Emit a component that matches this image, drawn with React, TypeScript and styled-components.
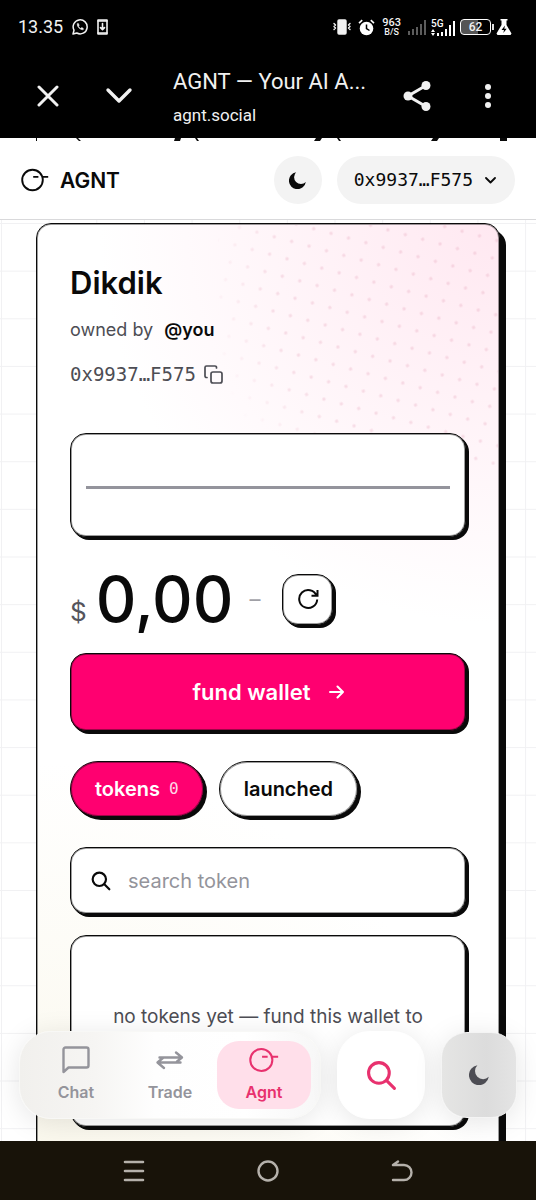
import React from "react";
import styled, { createGlobalStyle } from "styled-components";

const ink = "#0a0a0a";
const pink = "#ff0070";
const rose = "#e8316e";
const grey = "#94949b";
const body = "#4d4d54";
const sans = `Inter, "Liberation Sans", sans-serif`;
const mono = `"DejaVu Sans Mono", "Liberation Mono", monospace`;
const system = `Roboto, "Liberation Sans", sans-serif`;

const GlobalStyle = createGlobalStyle`
  *, *::before, *::after { box-sizing: border-box; }
  body { margin: 0; background: #fff; color: ${ink}; font-family: ${sans}; }
  button, input { font: inherit; color: inherit; margin: 0; }
  button { border: 0; padding: 0; background: none; cursor: pointer; }
  a { color: inherit; text-decoration: none; }
  svg { display: block; flex: none; }
  h1, p { margin: 0; }
`;

const Phone = styled.div`
  display: flex;
  flex-direction: column;
  height: 100vh;
  overflow: hidden;
`;

const StatusBar = styled.div`
  display: flex;
  align-items: center;
  justify-content: space-between;
  height: 54px;
  padding: 0 24px 0 18px;
  background: #000;
  color: #f2f2f2;
  font: 400 18px/22px ${system};
`;

const StatusGroup = styled.div<{ $gap: number }>`
  display: flex;
  align-items: center;
  gap: ${(p) => p.$gap}px;
`;

const Rate = styled.div`
  display: flex;
  flex-direction: column;
  align-items: center;
  font: 500 11px/10px ${system};
  small { font-size: 9px; line-height: 9px; }
`;

const Battery = styled.div`
  position: relative;
  width: 31px;
  height: 16px;
  border: 1px solid #fff;
  border-radius: 4px;
  background: linear-gradient(90deg, #555 60%, #000 60%);
  text-align: center;
  font: 500 12px/14px ${system};
  &::after {
    content: "";
    position: absolute;
    right: -4px;
    top: 4px;
    width: 2px;
    height: 6px;
    background: #ddd;
  }
`;

const BrowserBar = styled.div`
  display: flex;
  align-items: center;
  height: 84px;
  padding: 0 32px;
  background: #000;
  color: #f1f1f1;
`;

const BarButton = styled.button`
  display: grid;
  place-items: center;
  width: 32px;
  height: 40px;
`;

const BarSpacer = styled.span<{ $width: number }>`
  width: ${(p) => p.$width}px;
`;

const PageTitle = styled.div`
  flex: 1;
  min-width: 0;
  padding-top: 4px;
  font-family: ${system};
  div { font-size: 22px; line-height: 34px; overflow: hidden; white-space: nowrap; text-overflow: ellipsis; }
  span { display: block; font-size: 17px; line-height: 32px; }
`;

const Viewport = styled.div`
  position: relative;
  flex: 1;
  min-height: 0;
  overflow: hidden;
`;

const TickerEdge = styled.div`
  height: 3px;
  overflow: hidden;
`;

const SiteHeader = styled.header`
  display: flex;
  align-items: center;
  gap: 15px;
  height: 79px;
  padding: 0 21px;
  border-bottom: 1px solid #d9d9db;
  background: #fff;
`;

const Brand = styled.a`
  display: flex;
  align-items: center;
  gap: 11px;
  margin-right: auto;
  font-size: 21px;
  font-weight: 600;
`;

const RoundButton = styled.button`
  display: grid;
  place-items: center;
  width: 48px;
  height: 48px;
  border-radius: 24px;
  background: #f3f3f3;
`;

const WalletButton = styled.button`
  display: flex;
  align-items: center;
  gap: 12px;
  height: 48px;
  padding: 0 19px 0 17px;
  border-radius: 24px;
  background: #f3f3f3;
  font: 400 18px/24px ${mono};
`;

const GridPaper = styled.main`
  min-height: 100%;
  padding: 3px 36px 0;
  background-image: linear-gradient(#f1f1f3 1px, transparent 1px),
    linear-gradient(90deg, #f1f1f3 1px, transparent 1px);
  background-size: calc(100vw / 11.25) calc(100vw / 11.25);
  background-position: 1px 3px;
`;

const Card = styled.section`
  position: relative;
  min-height: 1000px;
  padding: 40px 33px;
  border: 1px solid ${ink};
  border-radius: 15px;
  background: radial-gradient(circle at 100% 0, #ffe8f1 0, rgba(255, 232, 241, 0) 400px),
    radial-gradient(circle at 0 100%, #faf7ea 0, rgba(250, 247, 234, 0) 460px), #fff;
  box-shadow: inset 0 0 0 1px rgba(10, 10, 10, 0.4), 6px 7px 0 ${ink};
`;

const Dots = styled.svg`
  position: absolute;
  top: 1px;
  right: 1px;
  border-top-right-radius: 13px;
`;

const Content = styled.div`
  position: relative;
  display: flex;
  flex-direction: column;
`;

const AgentName = styled.h1`
  font-size: 31px;
  font-weight: 600;
  line-height: 38px;
`;

const Owner = styled.p`
  display: flex;
  gap: 11px;
  margin-top: 16px;
  color: ${body};
  font-size: 18px;
  line-height: 24px;
  strong { color: ${ink}; font-weight: 600; }
`;

const Address = styled.button`
  display: flex;
  align-items: center;
  gap: 8px;
  margin-top: 20px;
  color: ${body};
  font: 400 19px/24px ${mono};
`;

const Raised = styled.div`
  border: 1px solid ${ink};
  border-radius: 16px;
  background: #fff;
  box-shadow: inset 0 0 0 1px rgba(10, 10, 10, 0.4), 1px 1px 0 ${ink}, 2px 2px 0 ${ink}, 3px 3px 0 ${ink};
`;

const ChartBox = styled(Raised)`
  display: flex;
  align-items: center;
  height: 104px;
  margin-top: 47px;
  padding: 4px 15px 0;
  hr { width: 100%; height: 3px; margin: 0; border: 0; background: #94949c; }
`;

const Balance = styled.div`
  display: flex;
  align-items: center;
  height: 76px;
  margin-top: 24px;
`;

const Currency = styled.span`
  align-self: flex-end;
  margin-right: 9px;
  color: #55555c;
  font-size: 26px;
  line-height: 50px;
`;

const Amount = styled.span`
  font-size: 63px;
  font-weight: 500;
  line-height: 76px;
`;

const Change = styled.span`
  margin: 0 22px 0 16px;
  color: #a0a0a6;
  font-size: 22px;
`;

const RefreshButton = styled(Raised).attrs({ as: "button" })`
  display: grid;
  place-items: center;
  width: 51px;
  height: 51px;
`;

const FundButton = styled(Raised).attrs({ as: "button" })`
  display: flex;
  align-items: center;
  justify-content: center;
  gap: 18px;
  height: 78px;
  margin-top: 16px;
  background: ${pink};
  color: #fff;
  font-size: 22px;
  font-weight: 600;
`;

const Tabs = styled.div`
  display: flex;
  gap: 15px;
  margin-top: 30px;
`;

const Tab = styled(Raised).attrs({ as: "button" })<{ $active?: boolean }>`
  display: flex;
  align-items: center;
  gap: 9px;
  height: 56px;
  padding: 0 24px;
  border-radius: 28px;
  background: ${(p) => (p.$active ? pink : "#fff")};
  color: ${(p) => (p.$active ? "#fff" : ink)};
  font-size: 20px;
  font-weight: 600;
  small { font: 400 16px/20px ${mono}; color: #ffd5e6; }
`;

const SearchField = styled(Raised).attrs({ as: "label" })`
  display: flex;
  align-items: center;
  gap: 17px;
  height: 67px;
  margin-top: 30px;
  padding: 0 20px;
  input {
    flex: 1;
    min-width: 0;
    border: 0;
    padding: 0;
    outline: 0;
    background: none;
    font-size: 20px;
    line-height: 26px;
  }
  input::placeholder { color: ${grey}; opacity: 1; }
`;

const EmptyState = styled(Raised)`
  height: 192px;
  margin-top: 21px;
  padding: 69px 20px 0;
  color: ${body};
  text-align: center;
  font-size: 19px;
  line-height: 24px;
`;

const Dock = styled.div`
  position: absolute;
  left: 19px;
  right: 19px;
  bottom: 22px;
  display: flex;
  align-items: center;
  gap: 16px;
`;

const DockGroup = styled.nav`
  display: flex;
  flex: 1;
  align-items: center;
  height: 88px;
  padding: 0 9px;
  border: 1px solid #f8f8f6;
  border-radius: 32px;
  background: linear-gradient(90deg, #f1f0ed 0, #f6f5f3 25%, #fefefe 45%, #fff 75%, #f7f7f7 100%);
  box-shadow: 0 4px 28px rgba(0, 0, 0, 0.1);
`;

const DockLink = styled.a<{ $active?: boolean }>`
  display: flex;
  flex: 1;
  flex-direction: column;
  align-items: center;
  gap: 4px;
  height: 68px;
  padding-top: 4px;
  border-radius: 22px;
  background: ${(p) => (p.$active ? "#ffdfea" : "transparent")};
  color: ${(p) => (p.$active ? rose : grey)};
  font-size: 16px;
  font-weight: 600;
  line-height: 26px;
`;

const DockButton = styled.button<{ $muted?: boolean }>`
  display: grid;
  place-items: center;
  width: ${(p) => (p.$muted ? 76 : 88)}px;
  height: ${(p) => (p.$muted ? 86 : 88)}px;
  border: 1px solid ${(p) => (p.$muted ? "#f4f4f4" : "#fff")};
  border-radius: ${(p) => (p.$muted ? 26 : 32)}px;
  background: ${(p) => (p.$muted ? "linear-gradient(90deg, #e5e5e4, #dcdcdc 60%, #e4e4e4)" : "#fff")};
  box-shadow: 0 4px 28px rgba(0, 0, 0, 0.1);
  color: ${(p) => (p.$muted ? body : rose)};
`;

const SystemNav = styled.div`
  display: flex;
  height: 59px;
  padding: 0 12.5%;
  background: #181309;
  color: #b5b1ab;
  button { flex: 1; display: grid; place-items: center; }
`;

const stroke = {
  fill: "none",
  stroke: "currentColor",
  strokeLinecap: "round" as const,
  strokeLinejoin: "round" as const,
};

const Moon = ({ size }: { size: number }) => (
  <svg width={size} height={size} viewBox="0 0 20 20" fill="currentColor">
    <path d="M8.4.3a10 10 0 1 0 11.4 11.5A7.3 7.3 0 0 1 8.4.3Z" />
  </svg>
);

const AgentMark = ({ width }: { width: number }) => (
  <svg width={width} height={width} viewBox="0 0 28 28" {...stroke} strokeWidth="1.9" strokeLinecap="butt">
    <circle cx="11.5" cy="14" r="10.3" />
    <path d="M12.2 10.9h5.2M20.8 10.9h6.4" />
  </svg>
);

const Magnifier = ({ size, weight }: { size: number; weight: number }) => (
  <svg width={size} height={size} viewBox="0 0 24 24" {...stroke} strokeWidth={weight}>
    <circle cx="10" cy="10" r="8" />
    <path d="m16 16 6 6" />
  </svg>
);

const Signal = ({ color }: { color: string }) => (
  <svg width="18" height="15" fill={color}>
    <path d="M0 11h2v4H0zM4 9h2v6H4zM8 7h2v8H8zM12 4h2v11h-2zM16 0h2v15h-2z" />
  </svg>
);

export default function App() {
  return (
    <Phone>
      <GlobalStyle />
      <StatusBar>
        <StatusGroup $gap={9}>
          <span>13.35</span>
          <svg width="16" height="16" viewBox="0 0 16 16" {...stroke} strokeWidth="1.5">
            <path d="m1 15 1-3.8A7 7 0 1 1 4.8 14Z" />
            <path d="M5.3 4.8c-.7 2.6 3.4 6.7 6 5.8l-.1-1.3-1.6-.7-.9.9c-1-.4-1.9-1.4-2.3-2.3l.7-.9-.6-1.5Z" fill="currentColor" strokeWidth=".6" />
          </svg>
          <svg width="11" height="16" viewBox="0 0 11 16" {...stroke} strokeWidth="1.6">
            <path d="M1 1h9v14H1Z" />
            <path d="M1 2h9M1 14h9M5.5 4.5v6M3.5 8.6l2 2 2-2" />
          </svg>
        </StatusGroup>
        <StatusGroup $gap={7}>
          <svg width="18" height="16" viewBox="0 0 18 16" {...stroke} strokeWidth="1.4">
            <rect x="5" y="1" width="8" height="14" rx="1" fill="currentColor" />
            <path d="m1 4.5 1.5 1.5L1 7.5 2.5 9 1 10.5M17 4.5 15.5 6 17 7.5 15.5 9l1.5 1.5" />
          </svg>
          <svg width="17" height="17" viewBox="0 0 17 17">
            <circle cx="8.5" cy="9.5" r="6.8" fill="#fff" />
            <path d="M8.5 5.5v4l3 2" fill="none" stroke="#000" strokeWidth="1.5" />
            <path d="M1 4.2 4.2 1.2M16 4.2l-3.2-3" stroke="#fff" strokeWidth="1.6" />
          </svg>
          <Rate>
            963<small>B/S</small>
          </Rate>
          <StatusGroup $gap={5}>
            <Signal color="#5c5c5c" />
            <svg width="24" height="17" viewBox="0 0 24 17" fill="#fff">
              <text x="0" y="8" fontFamily="Roboto, sans-serif" fontSize="10" fontWeight="500">5G</text>
              <path d="M6 14h2v3H6zM10 13h2v4h-2zM14 10h2v7h-2zM18 6h2v11h-2zM22 2h2v15h-2zM0 13l2-3 2 3zM0 14h4l-2 3z" />
            </svg>
            <Battery>62</Battery>
            <svg width="16" height="16" viewBox="0 0 16 16">
              <path d="M4.5 0h7v1.5h-1V6l5 8.5-1 1.5h-13L.5 14.5 5.5 6V1.5h-1Z" fill="#fff" />
              <path d="M9 6.5 5.5 11H8l-.7 3 3.4-4.3H8.3Z" fill="#000" />
            </svg>
          </StatusGroup>
        </StatusGroup>
      </StatusBar>

      <BrowserBar>
        <BarButton aria-label="Close">
          <svg width="22" height="22" viewBox="0 0 22 22" {...stroke} strokeWidth="3"><path d="m2 2 18 18M20 2 2 20" /></svg>
        </BarButton>
        <BarSpacer $width={39} />
        <BarButton aria-label="Minimise">
          <svg width="28" height="18" viewBox="0 0 28 18" {...stroke} strokeWidth="3.4"><path d="m3 3 11 11L25 3" /></svg>
        </BarButton>
        <BarSpacer $width={38} />
        <PageTitle>
          <div>AGNT — Your AI A...</div>
          <span>agnt.social</span>
        </PageTitle>
        <BarButton aria-label="Share">
          <svg width="28" height="30" viewBox="0 0 28 30" fill="currentColor">
            <path d="M23 4.5 5 15l18 10.5" fill="none" stroke="currentColor" strokeWidth="3" />
            <circle cx="23" cy="4.5" r="4.5" /><circle cx="5" cy="15" r="4.5" /><circle cx="23" cy="25.5" r="4.5" />
          </svg>
        </BarButton>
        <BarSpacer $width={39} />
        <BarButton aria-label="More">
          <svg width="6" height="24" viewBox="0 0 6 24" fill="currentColor">
            <circle cx="3" cy="3" r="3" /><circle cx="3" cy="12" r="3" /><circle cx="3" cy="21" r="3" />
          </svg>
        </BarButton>
      </BrowserBar>

      <Viewport>
        <TickerEdge>
          <svg width="536" height="3" viewBox="0 0 536 3" fill={ink} aria-hidden="true">
            <path d="M36 0h1v3h-1zM76 0h2l3 3h-2zM175 0h6l-1 3h-6zM195 0h2l2 3h-2zM316 0h6l-2 3h-6zM337 0h2l2 3h-2zM433 0h6l-2 3h-6zM500 0h7v3h-7z" />
          </svg>
        </TickerEdge>
        <SiteHeader>
          <Brand href="#">
            <AgentMark width={28} />
            AGNT
          </Brand>
          <RoundButton aria-label="Dark mode"><Moon size={17} /></RoundButton>
          <WalletButton>
            0x9937…F575
            <svg width="11" height="7" viewBox="0 0 11 7" {...stroke} strokeWidth="1.8"><path d="m1 1 4.5 4.5L10 1" /></svg>
          </WalletButton>
        </SiteHeader>

        <GridPaper>
          <Card>
            <Dots width="280" height="240" viewBox="0 0 280 240" aria-hidden="true">
              <defs>
                <pattern id="dots" x="-9" y="-9" width="18" height="18" patternUnits="userSpaceOnUse" patternTransform="translate(95.7 3.7) rotate(15)">
                  <circle cx="9" cy="9" r="1.7" fill="#ecb8ca" />
                </pattern>
                <radialGradient id="fade" gradientUnits="userSpaceOnUse" cx="230" cy="60" r="290">
                  <stop offset="0" stopColor="#fff" stopOpacity=".45" />
                  <stop offset=".6" stopColor="#fff" stopOpacity=".4" />
                  <stop offset=".85" stopColor="#fff" stopOpacity="0" />
                </radialGradient>
                <mask id="edge"><rect width="280" height="240" fill="url(#fade)" /></mask>
              </defs>
              <rect width="280" height="240" fill="url(#dots)" mask="url(#edge)" />
            </Dots>
            <Content>
              <AgentName>Dikdik</AgentName>
              <Owner>owned by <strong>@you</strong></Owner>
              <Address aria-label="Copy address">
                0x9937…F575
                <svg width="19" height="19" viewBox="0 0 19 19" {...stroke} strokeWidth="1.7">
                  <rect x="7" y="7" width="11" height="11" rx="2" />
                  <path d="M3 12.5H2.5A1.5 1.5 0 0 1 1 11V2.5A1.5 1.5 0 0 1 2.5 1H11a1.5 1.5 0 0 1 1.5 1.5V3" />
                </svg>
              </Address>
              <ChartBox><hr /></ChartBox>
              <Balance>
                <Currency>$</Currency>
                <Amount>0,00</Amount>
                <Change>–</Change>
                <RefreshButton aria-label="Refresh">
                  <svg width="22" height="22" viewBox="0 0 22 22" {...stroke} strokeWidth="2" strokeLinecap="butt" strokeLinejoin="miter">
                    <path d="M19.5 7.5A9 9 0 1 0 20.2 11.5M20.5 2v5.8h-6" />
                  </svg>
                </RefreshButton>
              </Balance>
              <FundButton>
                fund wallet
                <svg width="15" height="14" viewBox="0 0 15 14" {...stroke} strokeWidth="2"><path d="M1 7h13M8.5 1.5 14 7l-5.5 5.5" /></svg>
              </FundButton>
              <Tabs>
                <Tab $active>tokens <small>0</small></Tab>
                <Tab>launched</Tab>
              </Tabs>
              <SearchField>
                <Magnifier size={20} weight={2.6} />
                <input type="text" aria-label="search token" placeholder="search token" />
              </SearchField>
              <EmptyState>no tokens yet — fund this wallet to</EmptyState>
            </Content>
          </Card>
        </GridPaper>

        <Dock>
          <DockGroup>
            <DockLink href="#chat">
              <svg width="30" height="30" viewBox="0 0 30 30" {...stroke} strokeWidth="2.4">
                <path d="M2.5 27V4.5a2 2 0 0 1 2-2h21a2 2 0 0 1 2 2v16a2 2 0 0 1-2 2h-18Z" />
              </svg>
              Chat
            </DockLink>
            <DockLink href="#trade">
              <svg width="30" height="30" viewBox="0 0 30 30" {...stroke} strokeWidth="2.4">
                <path d="M4.5 12.5h22M21 7.5 27 12.5 22 16.5M25.5 17.5H3M8.5 12.5 2.5 17.5l6.5 5.5" />
              </svg>
              Trade
            </DockLink>
            <DockLink href="#agnt" $active>
              <AgentMark width={30} />
              Agnt
            </DockLink>
          </DockGroup>
          <DockButton aria-label="Search"><Magnifier size={31} weight={2.4} /></DockButton>
          <DockButton $muted aria-label="Dark mode"><Moon size={20} /></DockButton>
        </Dock>
      </Viewport>

      <SystemNav>
        <button aria-label="Recent apps">
          <svg width="22" height="22" viewBox="0 0 22 22" {...stroke} strokeWidth="2.6"><path d="M2 2h18M2 11h18M2 20h18" /></svg>
        </button>
        <button aria-label="Home">
          <svg width="22" height="22" viewBox="0 0 22 22" {...stroke} strokeWidth="2.4"><circle cx="11" cy="11" r="9.5" /></svg>
        </button>
        <button aria-label="Back">
          <svg width="22" height="22" viewBox="0 0 22 22" {...stroke} strokeWidth="2.4"><path d="M7 1.5 2 5h11a7.5 7.5 0 0 1 0 15H2" /></svg>
        </button>
      </SystemNav>
    </Phone>
  );
}
